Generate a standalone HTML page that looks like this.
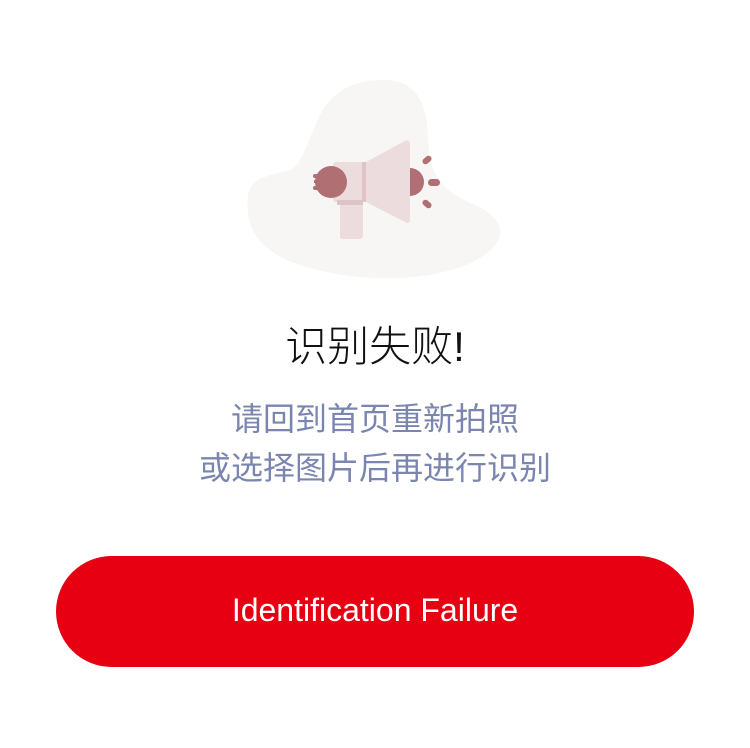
<!DOCTYPE html>
<html><head><meta charset="utf-8"><style>
body{margin:0;width:750px;height:748px;background:#fff;font-family:"Liberation Sans","Noto Sans CJK SC",sans-serif;position:relative;overflow:hidden}
.t{position:absolute;left:0;width:750px;text-align:center}
</style></head><body>
<svg width="750" height="300" style="position:absolute;left:0;top:0">
<path d="M380 80 C420 78 428 110 428 140 C430 175 440 190 475 205 C505 218 510 240 480 258 C440 282 360 285 300 265 C255 250 245 225 248 195 C250 178 270 175 290 170 C305 165 312 120 330 100 C345 85 360 81 380 80Z" fill="#f8f6f5"/>
<rect x="340" y="200" width="23" height="39" rx="3" fill="#ecdcdd"/>
<rect x="333" y="162" width="33" height="40" rx="3" fill="#ecdcdd"/>
<rect x="337" y="200" width="26" height="5" fill="#dfc4c7"/>
<rect x="362" y="162" width="4" height="40" fill="#dfc4c7"/>
<path d="M366 162 L405 141 Q410 139 410 145 L410 219 Q410 225 405 222 L366 202Z" fill="#ecdcdd"/>
<path d="M410 168 A14 14 0 0 1 410 196Z" fill="#b07073"/>
<circle cx="331" cy="182" r="16" fill="#b07073"/>
<rect x="313" y="174" width="8" height="4" rx="2" fill="#b07073"/>
<rect x="313" y="186" width="8" height="4" rx="2" fill="#b07073"/>
<rect x="314" y="180" width="6" height="3" fill="#b07073"/>
<rect x="422" y="157" width="10" height="6" rx="3" transform="rotate(-40 427 160)" fill="#b07073"/>
<rect x="428" y="179" width="12" height="7" rx="3.5" fill="#b07073"/>
<rect x="422" y="201" width="10" height="6" rx="3" transform="rotate(40 427 204)" fill="#b07073"/>
</svg>
<div class="t" style="top:318px;font-size:42px;line-height:58px;color:#111;font-weight:300">识别失败!</div>
<div class="t" style="top:395px;font-size:32px;color:#7a86b0;line-height:49px">请回到首页重新拍照<br>或选择图片后再进行识别</div>
<div style="position:absolute;left:56px;top:556px;width:638px;height:111px;border-radius:56px;background:#e60012;color:#fff;font-size:32px;text-align:center;line-height:109px">Identification Failure</div>
</body></html>
